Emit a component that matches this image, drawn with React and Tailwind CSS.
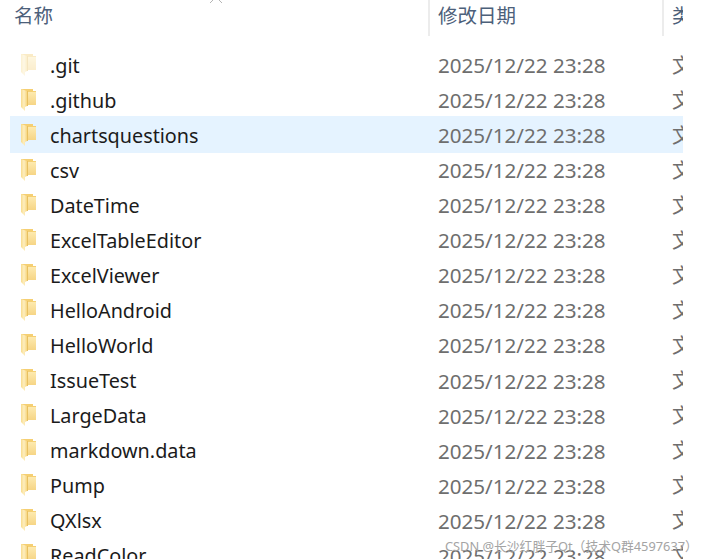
import React from 'react';

const names = ['.git', '.github', 'chartsquestions', 'csv', 'DateTime', 'ExcelTableEditor', 'ExcelViewer', 'HelloAndroid', 'HelloWorld', 'IssueTest', 'LargeData', 'markdown.data', 'Pump', 'QXlsx', 'ReadColor'];

const Folder = ({ faded }) => (
    <svg width="16" height="22" viewBox="0 0 16 22" className={faded ? 'opacity-40' : ''}>
        <defs>
            <linearGradient id="folderFront" x1="0" y1="0" x2="0" y2="1">
                <stop offset="0" stopColor="#fdeab0" />
                <stop offset="1" stopColor="#f6d585" />
            </linearGradient>
            <linearGradient id="folderFlap" x1="0" y1="0" x2="1" y2="0">
                <stop offset="0" stopColor="#f9dc8c" />
                <stop offset="0.5" stopColor="#fdeec0" />
                <stop offset="1" stopColor="#f7d67f" />
            </linearGradient>
        </defs>
        <path d="M0 0h12v2h3v14H0z" fill="#f5cf72" />
        <path d="M7 3h8v13H7z" fill="url(#folderFront)" />
        <path d="M0 0l6 2v15l-2 1v4l-4-4z" fill="url(#folderFlap)" />
        <path d="M6 2h1v15H6z" fill="#e8c060" />
    </svg>
);

const App = () => (
    <div className="w-[717px] h-[559px] bg-white overflow-hidden relative font-['Noto_Sans','Noto_Sans_CJK_SC',sans-serif]">
        <div className="w-[683px]">
            <div className="flex h-[36px] text-[#4c607a] text-[19.5px] overflow-hidden">
                <div className="w-[428px] pl-[14px] leading-[32px]">名称</div>
                <div className="w-[234px] pl-[8px] leading-[32px] border-l-2 border-[#ececec]">修改日期</div>
                <div className="flex-1 pl-[8px] leading-[32px] border-l-2 border-[#ececec] overflow-hidden whitespace-nowrap">类型</div>
            </div>
            <div className="pt-[11px]">
                {names.map((name, i) => (
                    <div
                        key={name}
                        className={`flex items-center ml-[10px] overflow-hidden ${i === 2 ? 'h-[37.05px] -my-px bg-[#e5f3ff]' : 'h-[35.05px]'}`}
                    >
                        <div className="w-[40px] pl-[11px] flex items-center">
                            <Folder faded={i === 0} />
                        </div>
                        <div className="w-[388px] pt-[2px] text-[19.8px] text-[#1b1b1b] whitespace-nowrap">{name}</div>
                        <div className="w-[234px] pt-[2px] text-[20.6px] text-[#6e6e6e] whitespace-nowrap">2025/12/22 23:28</div>
                        <div className="flex-1 pt-[2px] text-[20px] text-[#6e6e6e] whitespace-nowrap overflow-hidden">文件夹</div>
                    </div>
                ))}
            </div>
        </div>
        <svg width="14" height="6" viewBox="0 0 14 6" className="absolute left-[209px] top-[-2px]">
            <path d="M1 5l6-6 6 6" fill="none" stroke="#b5b5b5" strokeWidth="1" />
        </svg>
        <div className="absolute left-[445px] top-[536px] text-[12.8px] leading-[20px] text-[#a4a4a4] whitespace-nowrap">CSDN @长沙红胖子Qt（技术Q群4597637）</div>
    </div>
);

export default App;
